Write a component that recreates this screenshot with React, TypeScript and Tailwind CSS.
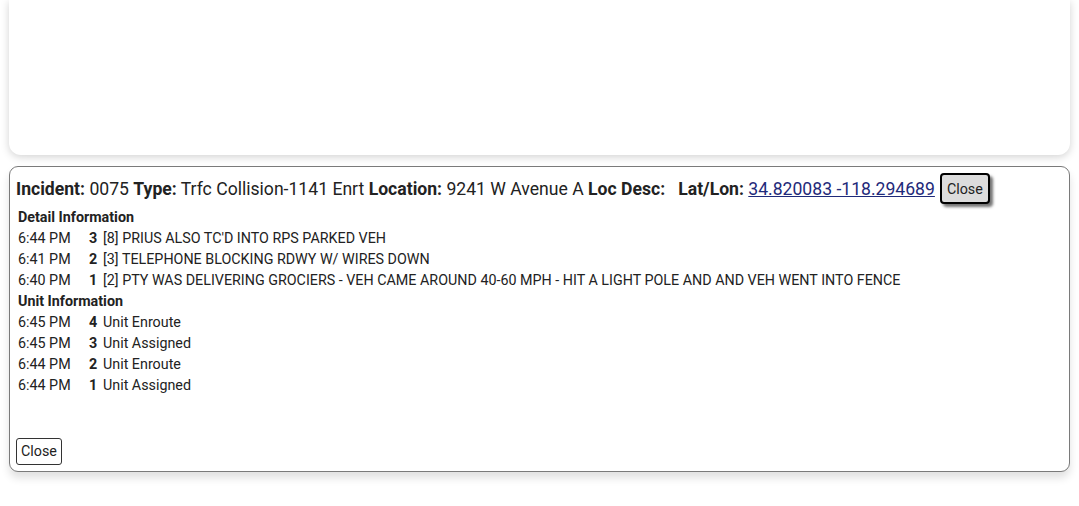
const detail = [
  { time: "6:44 PM", n: "3", text: "[8] PRIUS ALSO TC'D INTO RPS PARKED VEH" },
  { time: "6:41 PM", n: "2", text: "[3] TELEPHONE BLOCKING RDWY W/ WIRES DOWN" },
  {
    time: "6:40 PM",
    n: "1",
    text: "[2] PTY WAS DELIVERING GROCIERS - VEH CAME AROUND 40-60 MPH - HIT A LIGHT POLE AND AND VEH WENT INTO FENCE",
  },
];

const units = [
  { time: "6:45 PM", n: "4", text: "Unit Enroute" },
  { time: "6:45 PM", n: "3", text: "Unit Assigned" },
  { time: "6:44 PM", n: "2", text: "Unit Enroute" },
  { time: "6:44 PM", n: "1", text: "Unit Assigned" },
];

const Row = ({ time, n, text }: { time: string; n: string; text: string }) => (
  <div className="flex h-[21px] items-center">
    <span className="w-[71px] shrink-0">{time}</span>
    <span className="w-[14px] shrink-0 font-bold">{n}</span>
    <span>{text}</span>
  </div>
);

export default function App() {
  return (
    <div
      className="h-[506px] w-[1079px] overflow-hidden bg-white px-[9px] text-[#222]"
      style={{ fontFamily: "Roboto, 'Noto Sans', sans-serif" }}
    >
      <div className="h-[155px] rounded-b-[12px] bg-white shadow-[0_2px_8px_rgba(0,0,0,0.18)]" />

      <div className="mt-[11px] flex h-[306px] flex-col rounded-[9px] border border-[#7a7a7a] bg-white px-[6px] pt-[6px] shadow-[0_6px_8px_rgba(0,0,0,0.12)]">
        <div className="flex items-center text-[17.6px] leading-[20px]">
          <span className="whitespace-nowrap">
            <b className="font-bold">Incident:</b> 0075 <b className="font-bold">Type:</b> Trfc Collision-1141 Enrt{" "}
            <b className="font-bold">Location:</b> 9241 W Avenue A <b className="font-bold">Loc Desc:</b>
            &nbsp;&nbsp; <b className="font-bold">Lat/Lon:</b>{" "}
            <a className="text-[#1f2a7a] underline">34.820083 -118.294689</a>
          </span>
          <button className="ml-[5px] h-[31px] rounded-[4px] border-2 border-black bg-[#dcdcdc] px-[5px] text-[14.3px] shadow-[3px_3px_3px_rgba(0,0,0,0.55)]">
            Close
          </button>
        </div>

        <div className="mt-[3px] px-[2px] text-[14.3px]">
          <div className="flex h-[21px] items-center font-bold">Detail Information</div>
          {detail.map((r, i) => (
            <Row key={i} {...r} />
          ))}
          <div className="flex h-[21px] items-center font-bold">Unit Information</div>
          {units.map((r, i) => (
            <Row key={i} {...r} />
          ))}
        </div>

        <div className="mt-auto pb-[6px]">
          <button className="h-[27px] rounded-[3px] border border-[#333] bg-white px-[4px] text-[14.3px]">Close</button>
        </div>
      </div>
    </div>
  );
}
